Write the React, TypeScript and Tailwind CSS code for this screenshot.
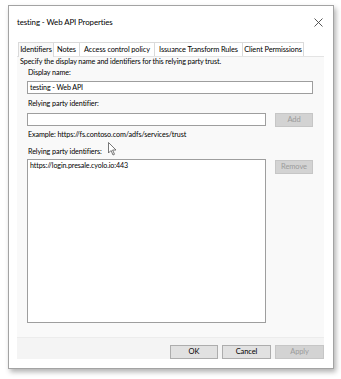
import React from 'react';

const tabs: { label: string; w: string }[] = [
  { label: 'Identifiers', w: 'w-[36px]' },
  { label: 'Notes', w: 'w-[26px]' },
  { label: 'Access control policy', w: 'w-[75px]' },
  { label: 'Issuance Transform Rules', w: 'w-[88px]' },
  { label: 'Client Permissions', w: 'w-[61px]' },
];

const Btn: React.FC<{ label: string; disabled?: boolean; className?: string }> = ({ label, disabled, className }) => (
  <div
    className={
      'flex items-center justify-center border text-[7.5px] tracking-[-0.1px] ' +
      (disabled ? 'bg-[#d3d3d3] border-[#c6c6c6] text-[#9b9b9b] ' : 'bg-[#e1e1e1] border-[#adadad] text-black ') +
      (className || '')
    }
  >
    {label}
  </div>
);

const App: React.FC = () => {
  return (
    <div className="w-[341px] h-[379px] bg-white relative font-['Lato','Liberation_Sans',sans-serif] text-black overflow-hidden">
      <div className="absolute left-[8px] top-[5px] w-[326px] h-[364px] bg-white border border-[#a3a3a3] shadow-[2px_3px_5px_rgba(0,0,0,0.3)] flex flex-col">
        {/* title bar */}
        <div className="h-[36px] flex items-start justify-between pl-[8px] pr-[10px] pt-[10px]">
          <span className="text-[7.9px] leading-[12px] tracking-[-0.1px]">testing - Web API Properties</span>
          <svg width="9" height="9" viewBox="0 0 9 9" className="mt-[2px]">
            <path d="M0.5 0.5 L8.5 8.5 M8.5 0.5 L0.5 8.5" stroke="#444" strokeWidth="0.9" />
          </svg>
        </div>

        {/* tabs */}
        <div className="flex pl-[9px] h-[14px] items-end">
          {tabs.map((t, i) => (
            <div
              key={t.label}
              className={
                t.w +
                ' whitespace-nowrap overflow-hidden flex items-center justify-center text-[7.4px] tracking-[-0.1px] border-t border-r border-[#dadada] ' +
                (i === 0 ? 'h-[15px] border-l bg-[#f9f9f9] relative top-[1px]' : 'h-[14px] bg-white')
              }
            >
              {t.label}
            </div>
          ))}
        </div>

        {/* panel */}
        <div className="ml-[8px] w-[307px] h-[281px] bg-[#f9f9f9] border-t border-[#e4e4e4] flex flex-col text-[7.2px] leading-[10px] tracking-[-0.1px]">
          <div className="pl-[3px]">Specify the display name and identifiers for this relying party trust.</div>
          <div className="pl-[10px] pr-[11px] flex flex-col">
            <div className="mt-[1px] pl-[1px]">Display name:</div>
            <div className="mt-[3px] h-[13px] border border-[#9e9e9e] bg-white flex items-center pl-[2px] text-[7.1px]">
              testing - Web API
            </div>
            <div className="mt-[5px] pl-[1px]">Relying party identifier:</div>
            <div className="mt-[4px] flex gap-[9px]">
              <div className="flex-1 h-[13px] border border-[#9e9e9e] bg-white" />
              <Btn label="Add" disabled className="w-[38px] h-[14px]" />
            </div>
            <div className="mt-[3px] pl-[1px]">Example: https://fs.contoso.com/adfs/services/trust</div>
            <div className="mt-[7px] pl-[1px]">Relying party identifiers:</div>
            <div className="mt-[2px] flex gap-[9px]">
              <div className="flex-1 h-[164px] border border-[#9e9e9e] bg-white pl-[2px] pt-[1px] text-[7.1px]">
                https://login.presale.cyolo.io:443
              </div>
              <Btn label="Remove" disabled className="w-[38px] h-[14px] mt-[1px]" />
            </div>
          </div>
        </div>

        {/* bottom buttons */}
        <div className="ml-[8px] w-[307px] h-[22px] bg-[#f4f4f4] border-t border-[#ececec] flex items-end justify-end gap-[4px]">
          <Btn label="OK" className="w-[48px] h-[14px]" />
          <Btn label="Cancel" className="w-[49px] h-[14px]" />
          <Btn label="Apply" disabled className="w-[49px] h-[14px]" />
        </div>
      </div>

      {/* mouse cursor */}
      <svg className="absolute left-[108px] top-[142px]" width="9" height="14" viewBox="0 0 9 14">
        <path d="M0.5 0.5 L0.5 11 L3 8.5 L5 13 L6.5 12.3 L4.6 8 L8 8 Z" fill="#fff" stroke="#555" strokeWidth="0.8" />
      </svg>
    </div>
  );
};

export default App;
